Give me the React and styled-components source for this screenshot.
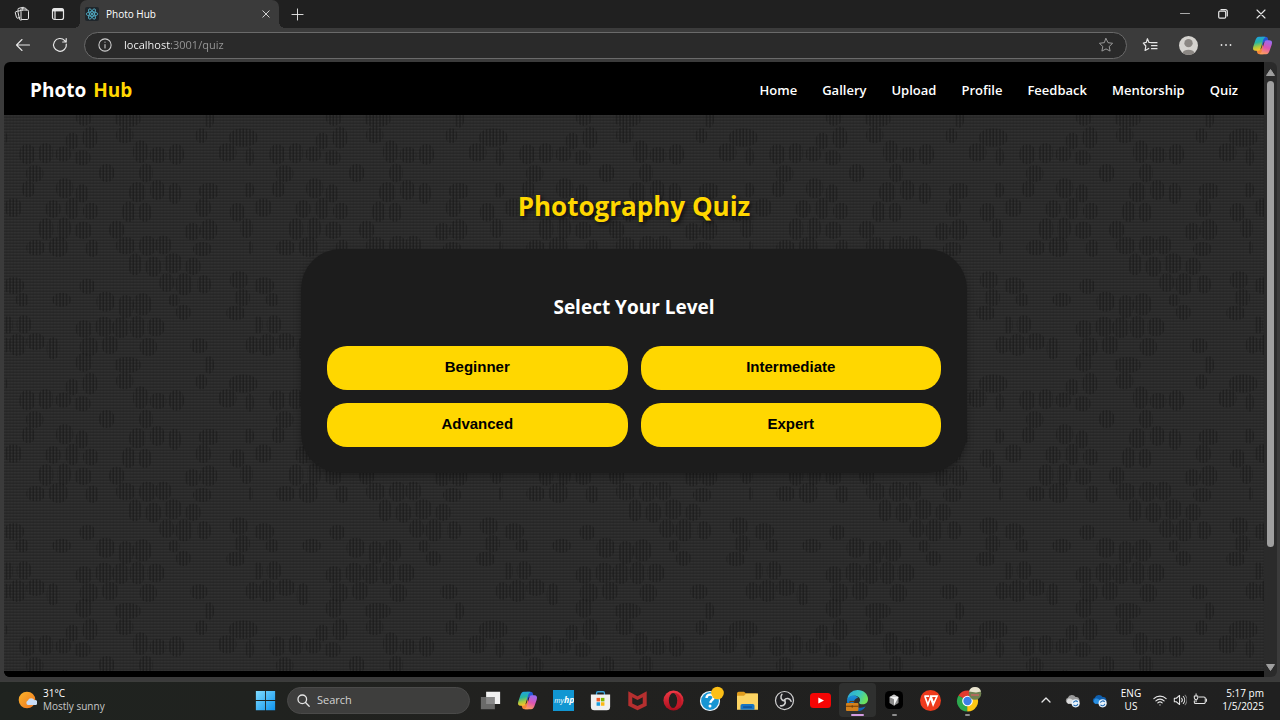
import React from 'react';
import styled, { createGlobalStyle } from 'styled-components';

const ui = "'Open Sans', 'Noto Sans', sans-serif";
const gold = '#ffd700';

const GlobalStyle = createGlobalStyle`
  * { box-sizing: border-box; }
  body { margin: 0; background: #202020; font-family: ${ui}; color: #fff; }
  button { border: 0; padding: 0; background: none; color: inherit; font: inherit; cursor: pointer; }
  a { color: inherit; text-decoration: none; }
  svg { display: block; flex: none; }
`;

const Screen = styled.div`
  display: flex;
  flex-direction: column;
  min-height: 100vh;
`;

/* browser frame */
const TabStrip = styled.div`
  display: flex;
  height: 28px;
  padding-left: 4px;
  background: #202020;
`;
const StripButton = styled.button`
  display: flex;
  align-items: center;
  justify-content: center;
  width: ${(p) => p.$w || 36}px;
  height: 28px;
`;
const Tab = styled.div`
  position: relative;
  display: flex;
  align-items: center;
  width: 199px;
  height: 28px;
  margin-left: 4px;
  padding: 0 5px;
  border-radius: 7px 7px 0 0;
  background: #3b3b3b;
  font-size: 10px;
  &::before, &::after {
    content: '';
    position: absolute;
    bottom: 0;
    width: 6px;
    height: 6px;
  }
  &::before { right: 100%; background: radial-gradient(circle at 0 0, transparent 6px, #3b3b3b 6px); }
  &::after { left: 100%; background: radial-gradient(circle at 100% 0, transparent 6px, #3b3b3b 6px); }
`;
const TabTitle = styled.span`
  flex: 1;
  margin-left: 7px;
`;
const TabClose = styled.button`
  display: flex;
  align-items: center;
  justify-content: center;
  width: 16px;
  height: 16px;
`;
const Spacer = styled.div`
  flex: 1;
`;
const Toolbar = styled.div`
  display: flex;
  align-items: center;
  height: 34px;
  padding-left: 4px;
  background: #3b3b3b;
`;
const ToolButton = styled.button`
  display: flex;
  align-items: center;
  justify-content: center;
  width: ${(p) => p.$w || 38}px;
  height: 28px;
`;
const AddressBar = styled.form`
  flex: 1;
  display: flex;
  align-items: center;
  height: 27px;
  margin: 0 4px;
  padding: 0 12px 0 13px;
  border: 1px solid #6a6a6a;
  border-radius: 14px;
  background: #2a2a2a;
`;
const AddressInput = styled.input`
  flex: 1;
  min-width: 0;
  margin-left: 12px;
  padding: 0;
  border: 0;
  outline: 0;
  font: 11px/20px ${ui};
  color: transparent;
  caret-color: #fff;
  background: linear-gradient(90deg, #fff 46px, #999 46px);
  background-clip: text;
  -webkit-background-clip: text;
`;
const Viewport = styled.div`
  flex: 1;
  display: flex;
  padding: 0 3px 4px 4px;
  background: #3b3b3b;
`;
const Page = styled.div`
  flex: 1;
  display: flex;
  flex-direction: column;
  overflow: hidden;
  border-radius: 6px 0 0 6px;
  background: #000;
`;
const ScrollTrack = styled.div`
  display: flex;
  flex-direction: column;
  align-items: center;
  width: 13px;
  padding: 7px 0 6px;
  border-radius: 0 6px 6px 0;
  background: #2b2b2b;
`;
const ScrollThumb = styled.div`
  flex: 4;
  width: 7px;
  margin-top: 5px;
  border-radius: 4px;
  background: #9f9f9f;
`;

/* web page */
const Header = styled.header`
  display: flex;
  align-items: center;
  justify-content: space-between;
  height: 53px;
  padding: 2px 26px 0 26px;
`;
const Brand = styled.a`
  font-size: 19px;
  font-weight: 700;
  span { margin-left: 2px; color: ${gold}; }
`;
const Nav = styled.nav`
  display: flex;
  gap: 25px;
  font-size: 13px;
  font-weight: 600;
`;
const Main = styled.main`
  position: relative;
  flex: 1;
  display: flex;
  flex-direction: column;
  align-items: center;
  padding: 73px 26px;
  background: #2d2d2d;
`;
const Texture = styled.svg`
  position: absolute;
  inset: 0;
  width: 100%;
  height: 100%;
`;
const Title = styled.h1`
  position: relative;
  margin: 0 0 25px;
  color: ${gold};
  font-size: 26px;
  line-height: 36px;
  font-weight: 700;
  text-shadow: 2px 2px 4px rgba(0, 0, 0, 0.7);
`;
const Card = styled.section`
  position: relative;
  width: 100%;
  max-width: 666px;
  padding: 44px 26px 26px;
  border-radius: 40px;
  background: #1c1c1c;
  box-shadow: 0 3px 7px rgba(0, 0, 0, 0.3);
`;
const CardTitle = styled.h2`
  margin: 0 0 25px;
  font-size: 19px;
  line-height: 28px;
  font-weight: 700;
  text-align: center;
`;
const Levels = styled.div`
  display: grid;
  grid-template-columns: 1fr 1fr;
  gap: 13px;
`;
const LevelButton = styled.button`
  height: 44px;
  padding-bottom: 2px;
  border-radius: 20px;
  background: ${gold};
  color: #000;
  font: 700 15px/20px 'Liberation Sans', Arial, sans-serif;
`;
const Footer = styled.footer`
  height: 6px;
  background: #000;
`;

/* taskbar */
const Taskbar = styled.footer`
  display: flex;
  align-items: center;
  height: 39px;
  padding: 0 16px 2px 17px;
  border-top: 1px solid #3c3d3b;
  background: linear-gradient(90deg, #1f231f, #21211f 40%, #202020);
  font-size: 10px;
  line-height: 13px;
`;
const Weather = styled.button`
  display: flex;
  align-items: center;
  gap: 6px;
  width: 230px;
  text-align: left;
  span { color: #c8c8c8; }
`;
const StartButton = styled.button`
  display: flex;
  justify-content: center;
  width: 36px;
`;
const SearchBox = styled.label`
  display: flex;
  align-items: center;
  gap: 7px;
  width: 183px;
  height: 27px;
  margin-left: 4px;
  padding: 0 9px;
  border: 1px solid #4a4a49;
  border-radius: 14px;
  background: #3e3e3d;
`;
const SearchInput = styled.input`
  flex: 1;
  min-width: 0;
  padding: 0;
  border: 0;
  outline: 0;
  background: none;
  color: #fff;
  font: 11px/18px ${ui};
  &::placeholder { color: #d2d2d2; opacity: 1; }
`;
const Apps = styled.div`
  display: flex;
  width: 514px;
  margin-left: 2px;
`;
const AppButton = styled.button`
  position: relative;
  flex: 1;
  display: flex;
  align-items: center;
  justify-content: center;
  height: 34px;
  border-radius: 4px;
  background: ${(p) => (p.$state === 'active' ? '#2f302f' : 'none')};
  &::after {
    content: '';
    position: absolute;
    bottom: 1px;
    width: ${(p) => (p.$state === 'active' ? 13 : 5)}px;
    height: 2px;
    border-radius: 1px;
    background: ${(p) => (p.$state === 'active' ? '#d39be0' : p.$state === 'open' ? '#8d8d8d' : 'transparent')};
  }
`;
const Tray = styled.div`
  display: flex;
  align-items: center;
  margin-left: auto;
`;
const TrayButton = styled.button`
  display: flex;
  align-items: center;
  justify-content: center;
  gap: 6px;
  width: ${(p) => p.$w}px;
  height: 30px;
`;
const Clock = styled.time`
  width: 53px;
  text-align: right;
  white-space: nowrap;
`;

/* background weave: patches given as [centre x, centre y, width, height] */
const TILE_W = 750;
const TILE_H = 738;
const patches = [
  [240, 4, 50, 56], [370, 12, 80, 48], [615, 12, 30, 52],
  [205, 78, 40, 50], [258, 68, 45, 65], [362, 60, 52, 50], [592, 62, 35, 45], [718, 68, 85, 55],
  [70, 118, 48, 60], [125, 115, 45, 60], [178, 117, 46, 45], [235, 128, 50, 45],
  [410, 110, 45, 68], [462, 120, 50, 48], [517, 118, 46, 62], [670, 112, 55, 55], [737, 125, 25, 55],
  [92, 176, 52, 50], [308, 174, 46, 54], [426, 174, 42, 55],
  [73, 222, 38, 50], [182, 220, 52, 60], [234, 235, 38, 55], [400, 232, 50, 60],
  [460, 225, 44, 60], [512, 235, 38, 64], [615, 228, 62, 48], [735, 225, 30, 45],
  [28, 278, 52, 55], [147, 282, 46, 52], [205, 280, 42, 64], [260, 288, 46, 50],
  [374, 290, 40, 62], [423, 292, 40, 58], [598, 278, 46, 56], [700, 292, 45, 56],
  [126, 342, 44, 65], [180, 340, 42, 65], [238, 346, 52, 52], [338, 344, 46, 54],
  [565, 350, 46, 52], [614, 344, 52, 62], [728, 340, 38, 58],
  [95, 398, 56, 46], [163, 396, 58, 60], [265, 400, 40, 52], [365, 392, 58, 52],
  [430, 392, 50, 60], [478, 390, 48, 56], [595, 402, 56, 42], [740, 398, 14, 40],
  [393, 448, 40, 66], [448, 455, 48, 60], [507, 445, 55, 60], [567, 454, 46, 52],
  [488, 503, 44, 55], [540, 508, 50, 66], [600, 508, 42, 55], [705, 495, 55, 52],
  [30, 512, 60, 50], [250, 514, 46, 46],
  [55, 554, 40, 40], [173, 554, 55, 42], [305, 560, 55, 60], [365, 575, 46, 70],
  [415, 568, 56, 66], [510, 556, 34, 36], [538, 592, 44, 46], [715, 548, 46, 52], [695, 594, 56, 44],
  [12, 630, 30, 52], [60, 628, 44, 55], [240, 642, 50, 52], [300, 635, 52, 60],
  [350, 638, 50, 62], [400, 636, 46, 68], [455, 636, 52, 56],
  [40, 690, 52, 66], [95, 680, 56, 50], [147, 700, 38, 66], [255, 695, 56, 56],
  [318, 690, 50, 54], [433, 696, 52, 54], [585, 692, 52, 45], [745, 690, 40, 52],
];
const wrapped = patches.flatMap(([x, y, w, h]) => {
  const xs = x + w / 2 > TILE_W ? [x, x - TILE_W] : [x];
  const ys = y - h / 2 < 0 ? [y, y + TILE_H] : [y];
  return xs.flatMap((cx) => ys.map((cy) => [cx, cy, w, h]));
});

const Weave = () => (
  <Texture aria-hidden="true">
    <defs>
      <pattern id="lines" width="10" height="9" patternUnits="userSpaceOnUse">
        <rect width="10" height="9" fill="#313131" />
        <path d="M0 6.500h10" stroke="#242424" strokeWidth="3.500" />
        <path d="M8 0v9" stroke="#202020" strokeOpacity=".25" strokeWidth="4" />
      </pattern>
      <pattern id="stripes" width="10" height="9" patternUnits="userSpaceOnUse">
        <path d="M8 0v9" stroke="#161616" strokeOpacity=".55" strokeWidth="4.500" />
      </pattern>
      <pattern id="tile" width={TILE_W} height={TILE_H} patternUnits="userSpaceOnUse" patternTransform="scale(.33333)">
        <rect width={TILE_W} height={TILE_H} fill="url(#lines)" />
        {wrapped.map(([x, y, w, h]) => (
          <rect key={`${x}-${y}`} x={x - w / 2} y={y - h / 2} width={w} height={h} rx={w * 0.45} ry={h * 0.42} fill="url(#stripes)" />
        ))}
      </pattern>
    </defs>
    <rect width="100%" height="100%" fill="url(#tile)" />
  </Texture>
);

/* icons */
const Line = ({ size = 16, w = 1.2, box = 16, color = '#e6e6e6', children }) => (
  <svg width={size} height={size} viewBox={`0 0 ${box} ${box}`} fill="none" stroke={color} strokeWidth={w} strokeLinecap="round" strokeLinejoin="round" aria-hidden="true">
    {children}
  </svg>
);
const Art = ({ size = 21, children }) => (
  <svg width={size} height={size} viewBox="0 0 24 24" aria-hidden="true">{children}</svg>
);
const WorkspacesIcon = () => (
  <Line w={1}>
    <path d="M5.500 11.500 3.800 12.100a1 1 0 0 1-1.300-.7L1.300 6.800a1 1 0 0 1 .7-1.200L4 5" />
    <path d="M8.500 13.500 6.800 14a1 1 0 0 1-1.200-.7L4 6.300a1 1 0 0 1 .7-1.200L6.500 4.600M4.200 4.800 4 3.500a1 1 0 0 1 .8-1.200l4.300-1a1 1 0 0 1 1.100.6" />
    <rect x="7" y="4" width="7.500" height="9.500" rx="1.300" />
    <path d="M6.500 4.500 7 3.300a1.500 1.500 0 0 1 1-.8l2.500-.5a1.500 1.500 0 0 1 1.700 1V4" />
  </Line>
);
const TabMenuIcon = () => (
  <Line w={1.2}>
    <rect x="2.500" y="2.500" width="11" height="11" rx="2" />
    <path d="M2.800 4h10.400" strokeWidth="2.800" strokeLinecap="butt" />
    <path d="M5 5v8" />
  </Line>
);
const ReactIcon = () => (
  <svg width="14" height="14" viewBox="0 0 14 14" aria-hidden="true">
    <rect width="14" height="14" rx="2" fill="#20262b" />
    <g fill="none" stroke="#57b9d3" strokeWidth=".8">
      <ellipse cx="7" cy="7" rx="5.800" ry="2.200" />
      <ellipse cx="7" cy="7" rx="5.800" ry="2.200" transform="rotate(60 7 7)" />
      <ellipse cx="7" cy="7" rx="5.800" ry="2.200" transform="rotate(120 7 7)" />
    </g>
    <circle cx="7" cy="7" r="1.100" fill="#57b9d3" />
  </svg>
);
const CloseIcon = ({ size = 8 }) => <Line size={size} box={10} w={1.1}><path d="m1 1 8 8M9 1 1 9" /></Line>;
const CopilotIcon = ({ size = 21, id }) => (
  <Art size={size}>
    <defs>
      <linearGradient id={`${id}a`} x1="0" y1="0" x2=".2" y2="1">
        <stop offset="0" stopColor="#1d9df0" /><stop offset=".45" stopColor="#27b5a0" /><stop offset=".75" stopColor="#a8c840" /><stop offset="1" stopColor="#f5c52b" />
      </linearGradient>
      <linearGradient id={`${id}b`} x1=".6" y1="0" x2=".3" y2="1">
        <stop offset="0" stopColor="#9a6cf0" /><stop offset=".5" stopColor="#dd55b0" /><stop offset="1" stopColor="#ffa15c" />
      </linearGradient>
    </defs>
    <path d="M11 2h4.500c1.500 0 2.300.8 2.700 2.200L19 7.500h-3.500c-1.600 0-2.200.8-2.700 2.200L11.500 13z" fill="#2558d8" />
    <path d="M13 22H8.500c-1.500 0-2.300-.8-2.700-2.200L5 16.500h3.500c1.600 0 2.200-.8 2.700-2.200l1.300-3.800z" fill="#f4873b" />
    <path d="M14.500 2H8C5.500 2 4.500 4 3.700 6.500L1.500 13c-1 3 0 5 2.700 5H7c1.700 0 2.400-1 2.900-2.600L13 5.200c.5-1.500 1-2.200 2.500-2.200z" fill={`url(#${id}a)`} />
    <path d="M9.500 22H16c2.500 0 3.500-2 4.300-4.500l2.200-6.500c1-3 0-5-2.700-5H17c-1.700 0-2.400 1-2.900 2.600L11 18.800c-.5 1.500-1 2.200-2.500 2.200z" fill={`url(#${id}b)`} />
  </Art>
);
const starPath = 'm8 1.500 2 4.200 4.600.6-3.400 3.200.9 4.600L8 11.900l-4.100 2.200.9-4.600L1.400 6.300 6 5.700z';

const WeatherIcon = () => (
  <Art size={20}>
    <defs><linearGradient id="sun" x1="0" y1="0" x2="1" y2="1"><stop stopColor="#fbb52a" /><stop offset="1" stopColor="#ef7421" /></linearGradient></defs>
    <circle cx="12" cy="12" r="10" fill="url(#sun)" />
    <path d="M13 18a3 3 0 0 1 0-5.500 4.500 4.500 0 0 1 8-.3 3 3 0 0 1 1.500 5.800z" fill="#c9dcf6" />
  </Art>
);
const WindowsIcon = () => (
  <Art>
    <defs><linearGradient id="win" x1="0" y1="0" x2="1" y2="1"><stop stopColor="#7fdcff" /><stop offset="1" stopColor="#0f93ee" /></linearGradient></defs>
    <path d="M1 1h10.500v10.500H1zM12.500 1H23v10.500H12.500zM1 12.500h10.500V23H1zM12.500 12.500H23V23H12.500z" fill="url(#win)" />
  </Art>
);
const TaskViewIcon = () => (
  <Art><rect x="7" y="2" width="16" height="14" fill="#f1f1f1" /><rect x="1" y="8" width="16" height="14" fill="#777" fillOpacity=".85" /></Art>
);
const MyHpIcon = () => (
  <Art>
    <rect width="24" height="24" fill="#1196d2" />
    <text x="1.500" y="15" fill="#fff" fontSize="8" fontStyle="italic" fontFamily="Open Sans, sans-serif">my</text>
    <text x="12.500" y="15" fill="#fff" fontSize="10" fontWeight="700" fontStyle="italic" fontFamily="Open Sans, sans-serif">hp</text>
  </Art>
);
const StoreIcon = () => (
  <Art>
    <path d="M7.500 6V3.500A1.500 1.500 0 0 1 9 2h6a1.500 1.500 0 0 1 1.500 1.500V6" fill="none" stroke="#3aa5dc" strokeWidth="1.500" />
    <path d="M1 5h22v14a4 4 0 0 1-4 4H5a4 4 0 0 1-4-4z" fill="#f0f0f0" />
    <path d="M7.500 9h4v4h-4z" fill="#f05a28" /><path d="M12.500 9h4v4h-4z" fill="#7fba00" />
    <path d="M7.500 14h4v4h-4z" fill="#1a9fe0" /><path d="M12.500 14h4v4h-4z" fill="#fdb813" />
  </Art>
);
const McAfeeIcon = () => (
  <Art><path d="M1.500 1.500 12 7l10.500-5.500V18L12 23 1.500 18z" fill="#b52f2f" /><path d="M6 8.200 12 11.500l6-3.300v7.300l-6 2.800-6-2.800z" fill="#21211f" /></Art>
);
const OperaIcon = () => (
  <Art>
    <defs><linearGradient id="op" x1="0" y1="0" x2="0" y2="1"><stop stopColor="#f23a46" /><stop offset="1" stopColor="#a80d1c" /></linearGradient></defs>
    <circle cx="12" cy="12" r="11.500" fill="url(#op)" />
    <path d="M12 3c5 0 9 4 9 9s-4 9-9 9c2.500-1 5-4 5-9s-2.500-8-5-9z" fill="#c01827" />
    <ellipse cx="11.500" cy="12" rx="4.800" ry="8.500" fill="#21211f" />
  </Art>
);
const HelpIcon = () => (
  <svg width="28" height="28" viewBox="0 0 28 28" aria-hidden="true">
    <circle cx="13" cy="15" r="9.500" fill="#1795d3" stroke="#f3f7fa" strokeWidth="1.200" />
    <path d="M9.500 12c.2-2.500 1.800-3.500 3.800-3.400 2.200.1 3.400 1.300 3.300 3-.1 2.400-3 2.600-3.300 5.200" fill="none" stroke="#fff" strokeWidth="2.400" />
    <circle cx="13" cy="20" r="1.500" fill="#fff" /><circle cx="20.500" cy="7" r="6.300" fill="#fcbf16" />
  </svg>
);
const FolderIcon = () => (
  <Art>
    <path d="M0 4a2 2 0 0 1 2-2h6l2.500 2H22a2 2 0 0 1 2 2v8H0z" fill="#e19c1c" />
    <path d="M0 6.500h8L10.500 4H24v18.500H0z" fill="#fcd463" />
    <path d="M4 22.500V18a2 2 0 0 1 2-2h12a2 2 0 0 1 2 2v4.500z" fill="#1775c4" /><path d="M7 19.500h10" stroke="#0d4c91" strokeWidth="1.500" />
  </Art>
);
const ObsIcon = () => (
  <Art>
    <circle cx="12" cy="12" r="10.300" fill="#1f1f22" stroke="#d0d0d0" strokeWidth="1.400" />
    <g fill="none" stroke="#d0d0d0" strokeWidth="1.800" strokeLinecap="round">
      {[0, 120, 240].map((a) => <path key={a} d="M12 12.500c-4-.5-5.300-4.500-3-7.500" transform={`rotate(${a} 12 12)`} />)}
    </g>
  </Art>
);
const YoutubeIcon = () => (
  <Art><rect y="3.500" width="24" height="17" rx="4" fill="#f50505" /><path d="m9.500 8.500 6.500 3.500-6.500 3.500z" fill="#fff" /></Art>
);
const EdgeIcon = () => (
  <Art size={23}>
    <defs>
      <linearGradient id="eg" x1="0" y1="0" x2="1" y2=".4"><stop stopColor="#2aa6dd" /><stop offset=".6" stopColor="#39c6c0" /><stop offset="1" stopColor="#6ce05c" /></linearGradient>
      <linearGradient id="eb" x1="0" y1="0" x2="0" y2="1"><stop stopColor="#1b8edb" /><stop offset="1" stopColor="#0d5cb0" /></linearGradient>
    </defs>
    <path d="M1 12a11 11 0 0 1 11-11c6.500 0 11 4.500 11 9.500 0 3.500-2.500 5.500-5.500 5.500-2.500 0-3.800-.8-3.800-1.700 0-.8 1-1.200 1-2.900C14.700 8.800 12 7 9 7c-4 0-6.800 2-8 5z" fill="url(#eg)" />
    <path d="M1 12c1-4 5-5.500 8-5 2 .3 3 1.200 3.500 2C9.500 9.500 8 12 8 14.500c0 5 5.500 6.500 12.500 3.700C18 22 15 23 12 23 6 23 1 18.500 1 12z" fill="url(#eb)" />
    <rect y="14.500" width="13" height="8.500" rx="1" fill="#d4811c" /><path d="M0 18h13M6.500 17v2.500M4 14.500V13h5v1.500" fill="none" stroke="#6c3906" strokeWidth="1" />
  </Art>
);
const CursorIcon = () => (
  <Art size={18}>
    <rect width="24" height="24" rx="6" fill="#000" />
    <path d="m12 4.500 6 3.500v8l-6 3.500L6 16V8z" fill="#8a8a8a" /><path d="m6 8 6-3.500L18 8l-6 2z" fill="#c9c9c9" /><path d="M18 8 12 19.500V11L6 8z" fill="#f3f3f3" />
  </Art>
);
const WpsIcon = () => (
  <Art><circle cx="12" cy="12" r="12" fill="#ee3a1c" /><path d="M5 7h5.500M5.500 7 9 17l3-8.500L15 17l4.500-10h-7l2.500 7" fill="none" stroke="#fff" strokeWidth="1.800" /></Art>
);
const ChromeIcon = () => (
  <svg width="28" height="28" viewBox="0 0 28 28" aria-hidden="true">
    <path d="M13.500 15 4.400 9.700A10.500 10.500 0 0 1 22.600 9.700z" fill="#e33b2e" />
    <path d="M13.500 15 4.400 9.700A10.500 10.500 0 0 0 13.500 25.500z" fill="#2da94f" />
    <path d="M13.500 15 22.600 9.700A10.500 10.500 0 0 1 13.500 25.500z" fill="#fdc713" />
    <path d="M4.400 9.700 9.500 18.500 13.500 15z" fill="#2da94f" /><path d="m13.500 25.500 5-8.500-5-2z" fill="#fdc713" /><path d="M22.600 9.700H13.500V15z" fill="#e33b2e" />
    <circle cx="13.500" cy="15" r="5.300" fill="#fff" /><circle cx="13.500" cy="15" r="4.200" fill="#3d7fe6" />
    <circle cx="21" cy="7.500" r="6.300" fill="#6f8150" /><path d="M15 5.500a6.300 6.300 0 0 1 12 0l-5 1z" fill="#e9e3cf" /><path d="M17 8h8v2h-8z" fill="#b06a5c" />
  </svg>
);
const CloudIcon = ({ dark, light }) => (
  <Art size={15}>
    <path d="M5 17a5 5 0 0 1-.5-9.500A7 7 0 0 1 17 6.500 5 5 0 0 1 20 16z" fill={dark} />
    <path d="M5 17a5 5 0 0 1 0-8c4-1 7 1 12 7v1z" fill={light} />
    <circle cx="17" cy="16.500" r="6.500" fill="#e8f2fb" />
    <path d="M13.500 15.500a3.800 3.800 0 0 1 6.800-1.200M20.500 17.500a3.800 3.800 0 0 1-6.800 1.200" fill="none" stroke="#1f6cb5" strokeWidth="1.700" />
  </Art>
);

const links = ['Home', 'Gallery', 'Upload', 'Profile', 'Feedback', 'Mentorship', 'Quiz'];
const levels = ['Beginner', 'Intermediate', 'Advanced', 'Expert'];
const apps = [
  ['Task View', <TaskViewIcon />], ['Copilot', <CopilotIcon id="t" />], ['myHP', <MyHpIcon />],
  ['Microsoft Store', <StoreIcon />], ['McAfee', <McAfeeIcon />], ['Opera', <OperaIcon />],
  ['Help', <HelpIcon />], ['File Explorer', <FolderIcon />], ['OBS Studio', <ObsIcon />],
  ['YouTube', <YoutubeIcon />], ['Microsoft Edge', <EdgeIcon />, 'active'], ['Cursor', <CursorIcon />, 'open'],
  ['WPS Office', <WpsIcon />], ['Google Chrome', <ChromeIcon />, 'open'],
];

export default function App() {
  return (
    <Screen>
      <GlobalStyle />
      <TabStrip>
        <StripButton aria-label="Workspaces"><WorkspacesIcon /></StripButton>
        <StripButton aria-label="Tab actions"><TabMenuIcon /></StripButton>
        <Tab>
          <ReactIcon />
          <TabTitle>Photo Hub</TabTitle>
          <TabClose aria-label="Close tab"><CloseIcon /></TabClose>
        </Tab>
        <StripButton aria-label="New tab"><Line size={13} box={14} w={1}><path d="M7 1v12M1 7h12" /></Line></StripButton>
        <Spacer />
        <StripButton $w={38} aria-label="Minimize"><Line size={10} box={10} w={1} color="#aaa"><path d="M.5 4.500h9" /></Line></StripButton>
        <StripButton $w={38} aria-label="Restore">
          <Line size={10} box={10} w={1.2}><rect x=".7" y="2.200" width="7" height="7" rx="1.200" /><path d="M3 .7h4.300a2 2 0 0 1 2 2V7" /></Line>
        </StripButton>
        <StripButton $w={38} aria-label="Close"><CloseIcon size={10} /></StripButton>
      </TabStrip>
      <Toolbar>
        <ToolButton aria-label="Back"><Line w={1.1}><path d="M14.500 8h-13M7 2.500 1.500 8 7 13.500" /></Line></ToolButton>
        <ToolButton $w={36} aria-label="Reload"><Line><path d="M14.300 7A6.400 6.400 0 1 1 12.800 3.700L14 5M14.200 1.500V5h-3.500" /></Line></ToolButton>
        <Gap />
        <AddressBar onSubmit={(e) => e.preventDefault()}>
          <Line size={14} color="#cfcfcf"><circle cx="8" cy="8" r="7" /><path d="M8 7.500v4M8 4.700v.1" /></Line>
          <AddressInput aria-label="Address" defaultValue="localhost:3001/quiz" />
          <Line color="#999" w={1}><path d={starPath} /></Line>
        </AddressBar>
        <ToolButton aria-label="Favorites">
          <Line><path d="m10 5.500-3-.1L5.400 1.700 4.300 5.400 1.300 6l2.500 3-.7 4.500 3.600-2M9 5.700h6M9.500 8.700H15M9.500 11.700H15" /></Line>
        </ToolButton>
        <ToolButton aria-label="Profile">
          <svg width="19" height="19" viewBox="0 0 20 20" aria-hidden="true">
            <circle cx="10" cy="10" r="10" fill="#d5d3cf" /><circle cx="10" cy="7.500" r="4.400" fill="#8b8783" /><path d="M3.500 17.500a7 5 0 0 1 13 0 10 10 0 0 1-13 0z" fill="#8b8783" />
          </svg>
        </ToolButton>
        <ToolButton aria-label="Settings and more"><Line size={12} box={12} w={1.8}><path d="M1.500 6h.01M6 6h.01M10.500 6h.01" /></Line></ToolButton>
        <ToolButton $w={35} aria-label="Copilot"><CopilotIcon id="s" /></ToolButton>
      </Toolbar>
      <Viewport>
        <Page>
          <Header>
            <Brand href="#home">Photo <span>Hub</span></Brand>
            <Nav>{links.map((l) => <a key={l} href={`#${l.toLowerCase()}`}>{l}</a>)}</Nav>
          </Header>
          <Main>
            <Weave />
            <Title>Photography Quiz</Title>
            <Card>
              <CardTitle>Select Your Level</CardTitle>
              <Levels>{levels.map((l) => <LevelButton key={l}>{l}</LevelButton>)}</Levels>
            </Card>
          </Main>
          <Footer />
        </Page>
        <ScrollTrack>
          <svg width="9" height="7" viewBox="0 0 9 7" aria-hidden="true"><path d="M4.500.5 8.500 6.500h-8z" fill="#9f9f9f" stroke="#9f9f9f" strokeLinejoin="round" /></svg>
          <ScrollThumb />
          <Spacer />
          <svg width="9" height="7" viewBox="0 0 9 7" aria-hidden="true"><path d="M4.500 6.500 8.500.5h-8z" fill="#9f9f9f" stroke="#9f9f9f" strokeLinejoin="round" /></svg>
        </ScrollTrack>
      </Viewport>
      <Taskbar>
        <Weather>
          <WeatherIcon />
          <div>31°C<br /><span>Mostly sunny</span></div>
        </Weather>
        <StartButton aria-label="Start"><WindowsIcon /></StartButton>
        <SearchBox>
          <Line size={13} w={1.6}><circle cx="6.500" cy="6.500" r="5.300" /><path d="m10.500 10.500 4.500 4.500" /></Line>
          <SearchInput aria-label="Search" placeholder="Search" />
        </SearchBox>
        <Apps>
          {apps.map(([name, icon, state]) => <AppButton key={name} $state={state} aria-label={name}>{icon}</AppButton>)}
        </Apps>
        <Tray>
          <TrayButton $w={26} aria-label="Show hidden icons"><Line size={10} box={10} w={1.3}><path d="m1 7 4-4 4 4" /></Line></TrayButton>
          <TrayButton $w={27} aria-label="OneDrive personal"><CloudIcon dark="#9a9a9a" light="#dcdcdc" /></TrayButton>
          <TrayButton $w={27} aria-label="OneDrive"><CloudIcon dark="#0f5fae" light="#2a8fe0" /></TrayButton>
          <TrayButton $w={36} aria-label="Input language">ENG<br />US</TrayButton>
          <TrayButton $w={62} aria-label="Network, volume, battery">
            <Line size={14} w={1.3}><path d="M1 6.500a10 10 0 0 1 14 0M3.300 9a6.700 6.700 0 0 1 9.400 0M5.500 11.300a3.600 3.600 0 0 1 5 0M8 13.500v.1" /></Line>
            <Line size={14} w={1.2}><path d="M1.500 6h2.300L7.500 2.800v10.400L3.800 10H1.500zM9.800 6a3 3 0 0 1 0 4M11.800 4a6 6 0 0 1 0 8" /><path d="M13.800 2.500a8 8 0 0 1 0 11" stroke="#777" /></Line>
            <Line size={14} w={1.2}><path d="M7 4.500h5.500a1.500 1.500 0 0 1 1.500 1.500v4.500a1.500 1.500 0 0 1-1.500 1.500H3a1.500 1.500 0 0 1-1.500-1.500V9M15.500 7v2.500M3.500 1v2M1.500 3.500h4v2a2 2 0 0 1-4 0zM3.500 7.500V10" /></Line>
          </TrayButton>
          <Clock>5:17 pm<br />1/5/2025</Clock>
        </Tray>
      </Taskbar>
    </Screen>
  );
}

const Gap = styled.div`
  width: 2px;
`;
